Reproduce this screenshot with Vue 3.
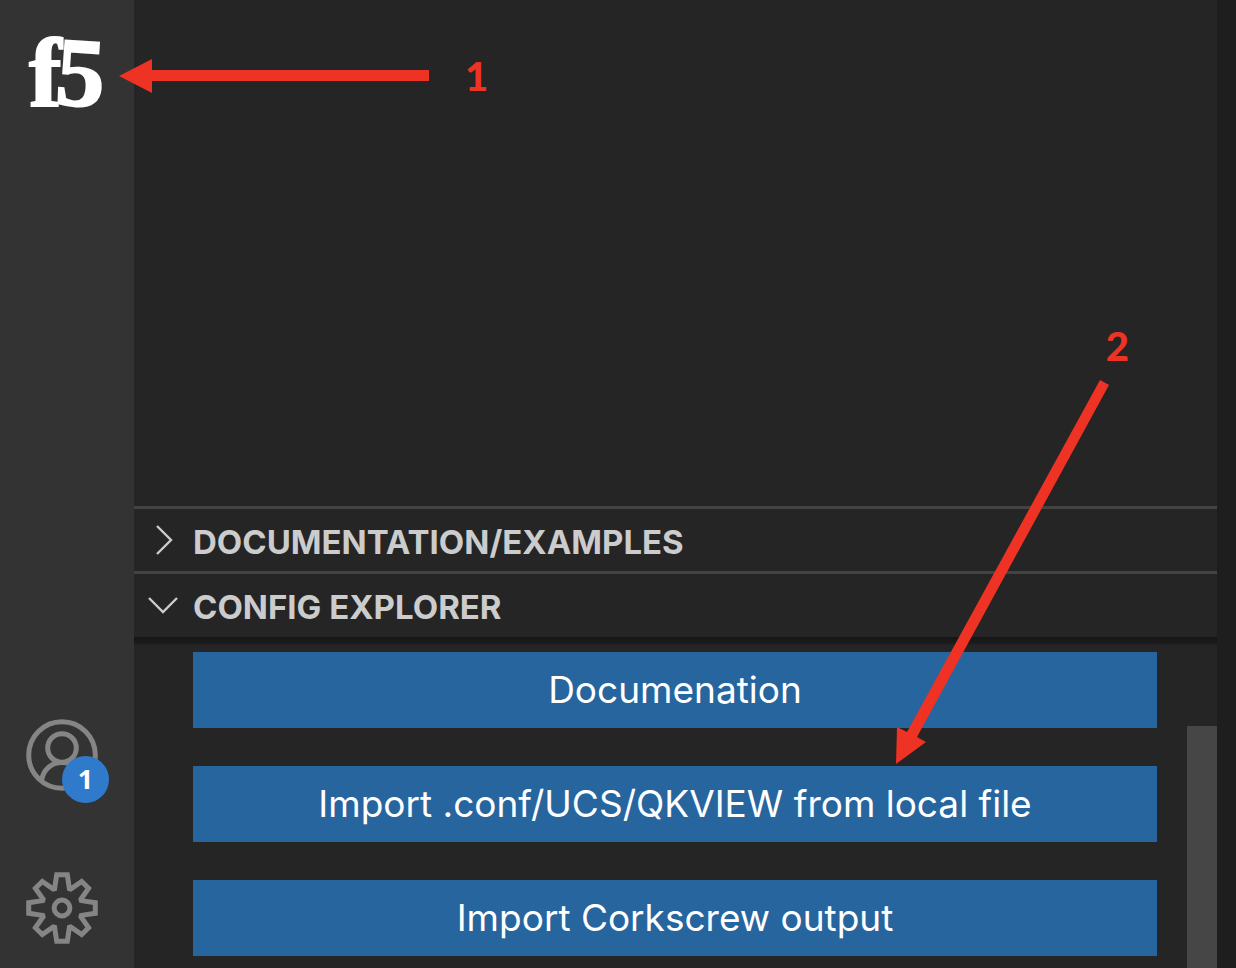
<script setup>
const actions = [
  'Documenation',
  'Import .conf/UCS/QKVIEW from local file',
  'Import Corkscrew output',
]
</script>

<template>
  <div class="workbench">
    <nav class="activity-bar" aria-label="Activity bar">
      <button class="activity" type="button" aria-label="F5">
        <svg class="logo" viewBox="0 0 72 72" aria-hidden="true">
          <text x="3 28" y="70 68" rotate="0 4">f5</text>
        </svg>
      </button>
      <div class="activity-group">
        <button class="activity" type="button" aria-label="Accounts">
          <svg viewBox="0 0 72 72" aria-hidden="true">
            <g fill="none" stroke="#858585" stroke-width="5">
              <circle cx="36" cy="36" r="33.3" />
              <circle cx="36" cy="29" r="14.3" />
              <path d="M15.5 62C17 51 25 43.5 36 43.5S55 51 56.500 62" />
            </g>
          </svg>
          <span class="badge">1</span>
        </button>
        <button class="activity" type="button" aria-label="Manage">
          <svg viewBox="-36 -36 72 72" aria-hidden="true">
            <g fill="none" stroke="#858585" stroke-width="5">
              <path d="M-5.300-33.300H5.300L7.400-19.300L8.800-18.900L19.700-26.600L26.600-19.700L18.900-8.800L19.300-7.400L33.300-5.300V5.300L19.300 7.400L18.900 8.800L26.600 19.700L19.700 26.600L8.800 18.900L7.400 19.300L5.300 33.300H-5.300L-7.400 19.300L-8.800 18.900L-19.700 26.600L-26.600 19.700L-18.900 8.800L-19.300 7.400L-33.300 5.300V-5.300L-19.300-7.400L-18.900-8.800L-26.600-19.700L-19.700-26.600L-8.800-18.900L-7.400-19.300Z" />
              <circle r="7.900" />
            </g>
          </svg>
        </button>
      </div>
    </nav>

    <main class="sidebar">
      <div class="view-space"></div>
      <button class="section" type="button" aria-expanded="false">
        <svg class="chevron" viewBox="0 0 32 32" aria-hidden="true"><path d="M10 2L24 16L10 30" /></svg>
        <span>DOCUMENTATION/EXAMPLES</span>
      </button>
      <button class="section" type="button" aria-expanded="true">
        <svg class="chevron" viewBox="0 0 32 32" aria-hidden="true"><path d="M2 9L16 23L30 9" /></svg>
        <span>CONFIG EXPLORER</span>
      </button>
      <div class="section-body">
        <button v-for="action in actions" :key="action" class="action" type="button">{{ action }}</button>
        <div class="scroll-thumb"></div>
      </div>
    </main>

    <div class="editor-edge"></div>

    <div class="callout callout-one">
      <svg width="310" height="34" viewBox="0 0 310 34" aria-hidden="true">
        <path d="M0 17L33 0V11H310V22H33V34Z" />
      </svg>
      <span>1</span>
    </div>
    <div class="callout callout-two">
      <span>2</span>
      <svg width="214" height="386" viewBox="0 0 214 386" aria-hidden="true">
        <path d="M0 384L1 347L11 352L204 0L213 5L21 357L30 362Z" />
      </svg>
    </div>
  </div>
</template>

<style>
body {
  margin: 0;
  background: #1e1e1e;
}
</style>

<style scoped>
.workbench {
  position: relative;
  display: flex;
  min-height: 100vh;
  overflow: hidden;
  background: #252526;
  font-family: Inter, "Liberation Sans", sans-serif;
}

button {
  margin: 0;
  border: 0;
  background: none;
  font: inherit;
  cursor: pointer;
}

.activity-bar {
  display: flex;
  flex: 0 0 134px;
  flex-direction: column;
  justify-content: space-between;
  box-sizing: border-box;
  padding: 36px 36px 24px 26px;
  background: #333333;
}

.activity-group {
  display: flex;
  flex-direction: column;
  gap: 81px;
}

.activity {
  position: relative;
  width: 72px;
  height: 72px;
  padding: 0;
}

.activity svg {
  display: block;
  width: 72px;
  height: 72px;
  overflow: visible;
}

.logo text {
  fill: #ffffff;
  stroke: #ffffff;
  stroke-width: 2;
  font-family: "Liberation Serif", serif;
  font-size: 98px;
  font-weight: 700;
}

.badge {
  position: absolute;
  right: -11px;
  bottom: -12px;
  width: 47px;
  height: 47px;
  border-radius: 50%;
  background: #307acc;
  color: #ffffff;
  font-family: "Noto Sans", sans-serif;
  font-size: 27px;
  font-weight: 700;
  line-height: 46px;
  text-align: center;
}

.sidebar {
  display: flex;
  flex: 1;
  flex-direction: column;
  min-width: 0;
}

.view-space {
  flex: 1;
}

.section {
  display: flex;
  align-items: center;
  gap: 14px;
  box-sizing: border-box;
  height: 65px;
  padding: 0 13px;
  border-top: 3px solid #434343;
  color: #cccccc;
  font-size: 33px;
  font-weight: 700;
  line-height: 40px;
  white-space: nowrap;
}

.section span {
  padding-top: 4px;
}

.chevron {
  flex: none;
  width: 32px;
  height: 32px;
  fill: none;
  stroke: #cccccc;
  stroke-width: 2.400;
}

.section-body {
  position: relative;
  display: flex;
  flex-direction: column;
  gap: 38px;
  padding: 16px 60px 12px 59px;
  background: linear-gradient(#252526 1px, #151515 1px, #1d1d1d 8px, #252526 9px);
}

.action {
  height: 76px;
  padding: 0 16px;
  background: #27659f;
  color: #ffffff;
  font-size: 37px;
  line-height: 48px;
  white-space: nowrap;
}

.scroll-thumb {
  position: absolute;
  right: 0;
  bottom: 0;
  width: 30px;
  height: 242px;
  background: #464646;
}

.editor-edge {
  flex: 0 0 19px;
  background: #1e1e1e;
}

.callout {
  position: absolute;
  display: flex;
  color: #ee3224;
  font-family: Lato, sans-serif;
  font-size: 40px;
  font-weight: 900;
  line-height: 48px;
  pointer-events: none;
}

.callout svg {
  display: block;
  fill: #ee3224;
}

.callout-one {
  top: 52px;
  left: 119px;
  align-items: center;
  gap: 36px;
}

.callout-two {
  right: 107px;
  bottom: 202px;
  flex-direction: column;
  align-items: flex-end;
  gap: 10px;
}

.callout-two svg {
  margin-right: 19px;
}
</style>
